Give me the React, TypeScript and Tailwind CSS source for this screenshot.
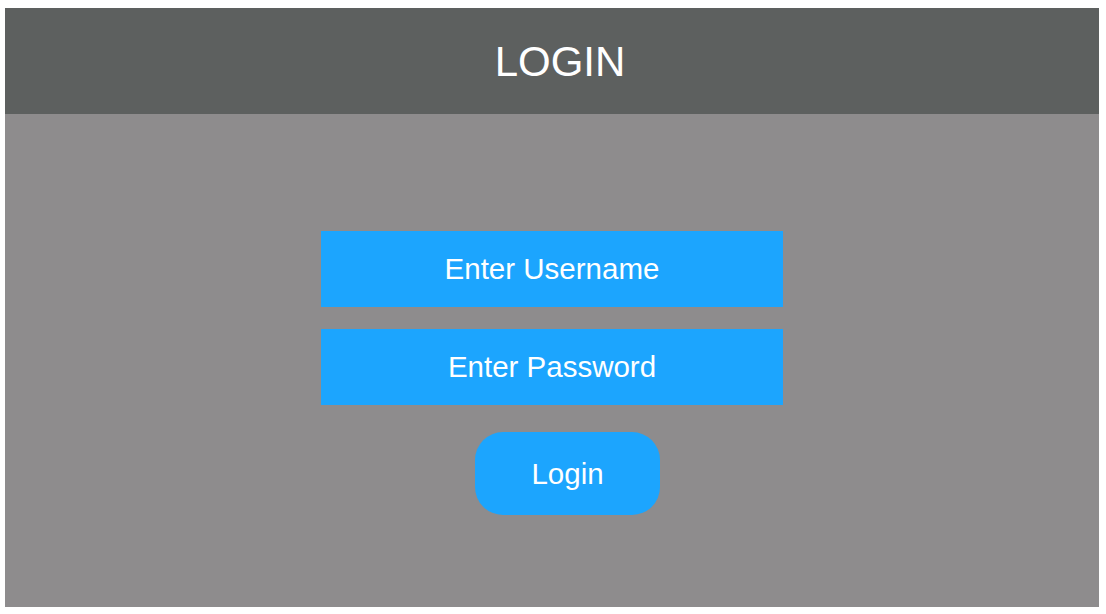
export default function App() {
  return (
    <div className="w-[1106px] h-[614px] bg-white pt-[8px] pl-[5px]" style={{ fontFamily: '"Liberation Sans", Arial, sans-serif' }}>
      <div className="w-[1094px] flex flex-col">
        <div className="h-[106px] bg-[#5d605f] flex items-center justify-center pl-[16px] pt-[2px] text-white text-[42px] leading-none">
          LOGIN
        </div>
        <div className="h-[493px] bg-[#8e8c8d] flex flex-col items-center pt-[117px]">
          <div className="w-[462px] h-[76px] bg-[#1ca5fe] flex items-center justify-center text-white text-[29.5px] leading-none">
            Enter Username
          </div>
          <div className="mt-[22px] w-[462px] h-[76px] bg-[#1ca5fe] flex items-center justify-center text-white text-[29.5px] leading-none">
            Enter Password
          </div>
          <button className="mt-[27px] ml-[31px] w-[185px] h-[83px] rounded-[28px] bg-[#1ca5fe] flex items-center justify-center text-white text-[29.5px] leading-none">
            Login
          </button>
        </div>
      </div>
    </div>
  );
}
